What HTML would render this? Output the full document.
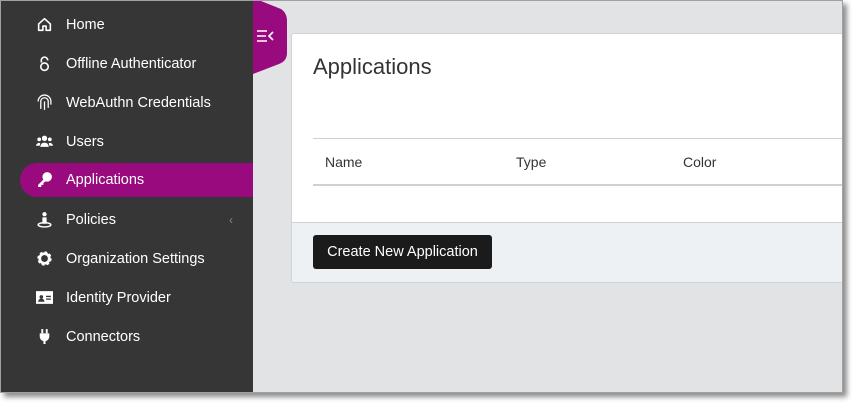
<!DOCTYPE html>
<html><head><style>
*{margin:0;padding:0;box-sizing:border-box}
body{width:858px;height:408px;background:#fff;position:relative;overflow:hidden;font-family:"Liberation Sans",sans-serif}
.frame{position:absolute;left:0;top:0;width:843px;height:393px;border:1px solid #a0a0a0;background:#e2e3e5;box-shadow:4px 4px 5px rgba(0,0,0,.45);overflow:hidden}
.side{position:absolute;left:0;top:0;width:252px;height:392px;background:#363636}
.item{position:absolute;left:19px;width:233px;height:34px;color:#fff;font-size:14.5px;line-height:34px;padding-left:46px}
.item.act{background:#990a7f;border-radius:17px 0 0 17px}
.ic{position:absolute;left:16px;top:8px;width:17px;height:17px}
.tab{position:absolute;left:252px;top:0}
.card{position:absolute;left:290px;top:32px;width:560px;height:250px;background:#fff;border:1px solid #cfd2d6;border-radius:3px;overflow:hidden}
.title{position:absolute;left:21px;top:20px;font-size:22px;color:#333}
.l1{position:absolute;left:21px;right:0;top:104px;border-top:1px solid #cdd0d4}
.l2{position:absolute;left:21px;right:0;top:150px;border-top:2px solid #cdd0d4}
.th{position:absolute;top:120px;font-size:14px;color:#333}
.foot{position:absolute;left:0;right:0;top:188px;bottom:0;background:#eef1f4;border-top:1px solid #cdd0d4}
.btn{position:absolute;left:21px;top:12px;width:179px;height:34px;background:#1b1b1b;border-radius:3px;color:#fff;font-size:14.5px;line-height:34px;text-align:center}
</style></head><body>
<div class="frame">
<div class="side">
<div class="item" style="top:7px"><svg class="ic" viewBox="0 0 16 16"><path d="M2.5 7.5L8 2.5l5.5 5v6h-4v-4h-3v4h-4z" fill="none" stroke="#fff" stroke-width="1.5" stroke-linejoin="round"/></svg>Home</div>
<div class="item" style="top:46px"><svg class="ic" viewBox="0 0 16 16"><path d="M5 7V5a3 3 0 0 1 6 0" fill="none" stroke="#fff" stroke-width="1.5"/><circle cx="8" cy="11" r="3.5" fill="none" stroke="#fff" stroke-width="1.5"/></svg>Offline Authenticator</div>
<div class="item" style="top:85px"><svg class="ic" viewBox="0 0 16 16"><g fill="none" stroke="#fff" stroke-width="1.2"><path d="M2 7a6 6 0 0 1 12 0v3"/><path d="M4.5 14V7a3.5 3.5 0 0 1 7 0v6"/><path d="M8 7v8"/></g></svg>WebAuthn Credentials</div>
<div class="item" style="top:124px"><svg class="ic" viewBox="0 0 16 16" fill="#fff"><circle cx="8" cy="5" r="2.5"/><circle cx="3" cy="6" r="1.8"/><circle cx="13" cy="6" r="1.8"/><path d="M4 13a4 4 0 0 1 8 0z"/><path d="M0 12a3 3 0 0 1 4-2.5L3.5 12zM16 12a3 3 0 0 0-4-2.5l.5 2.5z"/></svg>Users</div>
<div class="item act" style="top:162px"><svg class="ic" viewBox="0 0 16 16" fill="#fff"><circle cx="10.5" cy="5.5" r="4.5"/><path d="M7 8L2 13v2h3v-2h2v-2l2-1z"/></svg>Applications</div>
<div class="item" style="top:202px"><svg class="ic" viewBox="0 0 16 16" fill="#fff"><circle cx="8" cy="3" r="2"/><path d="M6 6h4v6H6z"/><ellipse cx="8" cy="13" rx="6" ry="2" fill="none" stroke="#fff" stroke-width="1.3"/></svg>Policies<span style="position:absolute;left:209px;color:#888;font-size:12px">‹</span></div>
<div class="item" style="top:241px"><svg class="ic" viewBox="0 0 16 16"><circle cx="8" cy="8" r="5" fill="none" stroke="#fff" stroke-width="3.5" stroke-dasharray="2.2 1.7"/><circle cx="8" cy="8" r="4.5" fill="none" stroke="#fff" stroke-width="2.5"/></svg>Organization Settings</div>
<div class="item" style="top:280px"><svg class="ic" viewBox="0 0 16 16"><rect x="0" y="2" width="16" height="12" fill="#fff"/><circle cx="5" cy="7.5" r="1.7" fill="#363636"/><path d="M2 12a3 3 0 0 1 6 0z" fill="#363636"/><path d="M9.5 7h4.5M9.5 9.5h4.5" stroke="#363636" stroke-width="1.2"/></svg>Identity Provider</div>
<div class="item" style="top:319px"><svg class="ic" viewBox="0 0 16 16" fill="#fff"><rect x="5" y="1" width="1.8" height="4"/><rect x="9.2" y="1" width="1.8" height="4"/><path d="M3.5 5h9v3a4.5 4.5 0 0 1-3.5 4.4V15H7v-2.6A4.5 4.5 0 0 1 3.5 8z"/></svg>Connectors</div>
</div>
<svg class="tab" width="36" height="75" viewBox="0 0 36 75"><path d="M0 0H8L28 8Q34 12 34 20V52Q34 60 26 63L0 73z" fill="#990a7f"/><g stroke="#fff" stroke-width="1.6"><path d="M4 30h10M4 35h9M4 40h10"/><path d="M20 31l-4 4 4 4" fill="none"/></g></svg>
<div class="card">
<div class="title">Applications</div>
<div class="l1"></div>
<div class="th" style="left:33px">Name</div>
<div class="th" style="left:224px">Type</div>
<div class="th" style="left:391px">Color</div>
<div class="l2"></div>
<div class="foot"><div class="btn">Create New Application</div></div>
</div>
</div>
</body></html>
